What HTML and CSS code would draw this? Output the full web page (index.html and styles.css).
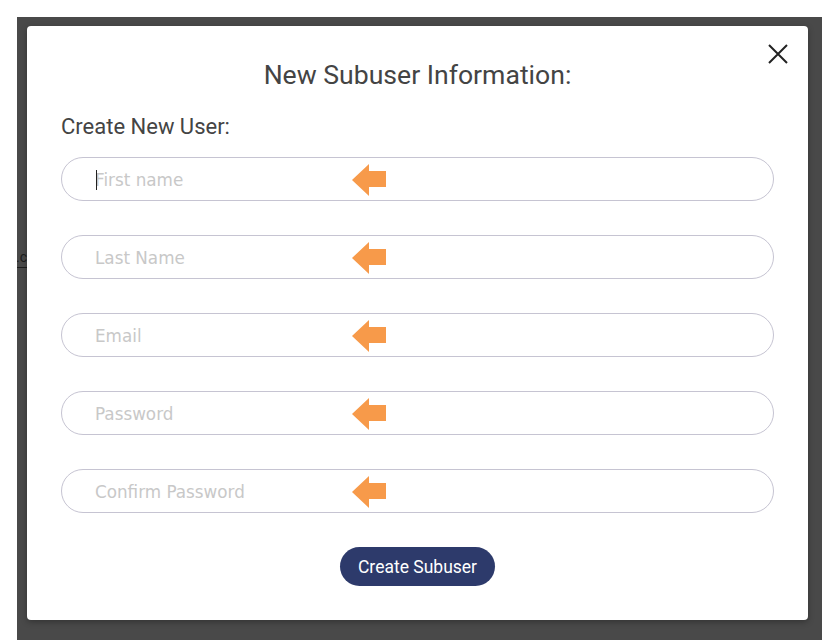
FILE: index.html
```html
<!DOCTYPE html>
<html lang="en">
<head>
    <meta charset="UTF-8">
    <meta name="viewport" content="width=device-width, initial-scale=1.0">
    <title>New Subuser</title>
    <link rel="stylesheet" href="styles.css">
</head>
<body>
    <div class="backdrop">
        <!-- page content peeking out behind the overlay -->
        <div class="peek"><span>l.c</span></div>

        <div class="modal">
            <button class="close" aria-label="Close">
                <svg width="20" height="20" viewBox="0 0 20 20">
                    <path d="M1 1 L19 19 M19 1 L1 19" stroke="#222" stroke-width="2" fill="none"/>
                </svg>
            </button>

            <h2 class="title">New Subuser Information:</h2>
            <p class="subtitle">Create New User:</p>

            <div class="fields">
                <div class="field">
                    <input type="text" placeholder="First name">
                    <span class="caret"></span>
                    <span class="arrow"></span>
                </div>
                <div class="field">
                    <input type="text" placeholder="Last Name">
                    <span class="arrow"></span>
                </div>
                <div class="field">
                    <input type="email" placeholder="Email">
                    <span class="arrow"></span>
                </div>
                <div class="field">
                    <input type="password" placeholder="Password">
                    <span class="arrow"></span>
                </div>
                <div class="field">
                    <input type="password" placeholder="Confirm Password">
                    <span class="arrow"></span>
                </div>
            </div>

            <div class="actions">
                <button class="submit">Create Subuser</button>
            </div>
        </div>
    </div>
</body>
</html>
```

FILE: styles.css
```css
body {
    margin: 0;
    padding: 17px 0 0 17px;
    background: #fff;
    font-family: Roboto, Arial, sans-serif;
    overflow: hidden;
}

.backdrop {
    display: flex;
    height: 623px;
    box-sizing: border-box;
    padding: 9px 14px 20px 0;
    background: #494949;
}

.peek {
    width: 10px;
    overflow: hidden;
    padding-top: 221px;
    direction: rtl;
}

.peek span {
    display: inline-block;
    font-size: 14px;
    line-height: 16px;
    color: #1c1c1c;
    border-bottom: 1px solid #1c1c1c;
    padding-bottom: 2px;
}

.modal {
    position: relative;
    flex: 1;
    background: #fff;
    border-radius: 4px;
    padding: 34px 34px 34px;
    box-sizing: border-box;
    box-shadow: 0 2px 6px rgba(0, 0, 0, 0.3);
}

.close {
    position: absolute;
    top: 18px;
    right: 20px;
    padding: 0;
    border: 0;
    background: none;
    width: 20px;
    height: 20px;
    cursor: pointer;
}

.close svg {
    display: block;
}

.title {
    margin: 0;
    text-align: center;
    font-size: 26.6px;
    line-height: 30px;
    font-weight: 400;
    color: #444;
}

.subtitle {
    margin: 24px 0 0;
    font-size: 22px;
    line-height: 26px;
    color: #444;
}

.fields {
    display: flex;
    flex-direction: column;
    gap: 34px;
    margin-top: 17px;
}

.field {
    position: relative;
}

.field input {
    display: block;
    width: 100%;
    height: 44px;
    box-sizing: border-box;
    padding: 2px 0 0 33px;
    border: 1.5px solid #c6c4d2;
    border-radius: 22px;
    font-family: "DejaVu Sans", Verdana, sans-serif;
    font-size: 16.8px;
    color: #333;
    outline: none;
}

.field input::placeholder {
    color: #c8c8c8;
}

.caret {
    position: absolute;
    left: 35px;
    top: 13px;
    width: 1px;
    height: 20px;
    background: #222;
}

.arrow {
    position: absolute;
    left: 291px;
    top: 7px;
    width: 34px;
    height: 32px;
    background: #f79a4a;
    clip-path: polygon(0 50%, 50% 0, 50% 22%, 100% 22%, 100% 72%, 50% 72%, 50% 100%);
}

.actions {
    display: flex;
    justify-content: center;
    margin-top: 34px;
}

.submit {
    height: 39px;
    padding: 0 18px;
    border: 0;
    border-radius: 20px;
    background: #2d3a6b;
    color: #fff;
    font-family: Roboto, Arial, sans-serif;
    font-size: 17.5px;
    cursor: pointer;
}
```
